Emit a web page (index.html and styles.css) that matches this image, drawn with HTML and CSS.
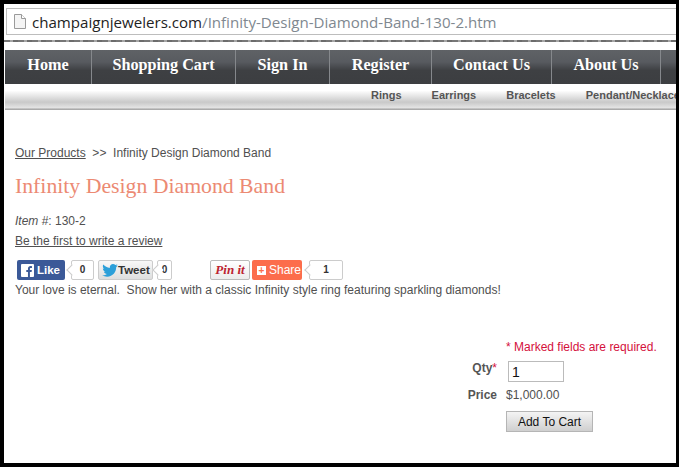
FILE: index.html
```html
<!DOCTYPE html>
<html lang="en">
<head>
  <meta charset="UTF-8">
  <title>Infinity Design Diamond Band</title>
  <link rel="stylesheet" href="styles.css">
</head>
<body>
  <div class="frame">
    <div class="browser-bar">
      <div class="address">
        <svg class="page-icon" width="12" height="15" viewBox="0 0 12 15"><path d="M.5.5h7l4 4v10H.5z" fill="#f4f4f4" stroke="#9a9a9a"/><path d="M7.5.5v4h4" fill="#fff" stroke="#9a9a9a"/></svg>
        <span class="host">champaignjewelers.com</span><span class="path">/Infinity-Design-Diamond-Band-130-2.htm</span>
      </div>
    </div>
    <div class="browser-edge"></div>

    <nav class="main-nav">
      <a href="#" class="nav-home">Home</a>
      <a href="#" class="nav-cart">Shopping Cart</a>
      <a href="#" class="nav-sign">Sign In</a>
      <a href="#" class="nav-reg">Register</a>
      <a href="#" class="nav-contact">Contact Us</a>
      <a href="#" class="nav-about">About Us</a>
    </nav>
    <div class="sub-nav">
      <a href="#">Rings</a>
      <a href="#">Earrings</a>
      <a href="#">Bracelets</a>
      <a href="#">Pendant/Necklace</a>
    </div>

    <div class="content">
      <p class="crumbs"><a href="#">Our Products</a>&nbsp; &gt;&gt;&nbsp; Infinity Design Diamond Band</p>
      <h1>Infinity Design Diamond Band</h1>
      <p class="item-no"><em>Item</em> #: 130-2</p>
      <p class="review"><a href="#">Be the first to write a review</a></p>

      <div class="social">
        <a href="#" class="btn-like">
          <svg width="13" height="13" viewBox="0 0 14 14"><rect width="14" height="14" rx="1" fill="#fff"/><path d="M9.6 14V8.6h1.8l.3-2.100H9.600V5.200c0-.6.2-1 1-1h1.200V2.300C11.500 2.300 11 2.200 10.300 2.200 8.700 2.200 7.500 3.200 7.500 5v1.500H5.700v2.100h1.800V14z" fill="#3b5998"/></svg>
          Like
        </a>
        <span class="count count-like">0</span>
        <a href="#" class="btn-tweet">
          <svg width="16" height="13" viewBox="0 0 24 20"><path d="M24 2.400c-.9.400-1.800.7-2.800.8 1-.6 1.800-1.600 2.200-2.700-1 .6-2 1-3.100 1.200C19.300.7 18 0 16.600 0c-2.700 0-4.900 2.200-4.900 4.900 0 .4 0 .8.100 1.100C7.700 5.800 4.100 3.900 1.700.9 1.200 1.600 1 2.500 1 3.400c0 1.700.9 3.200 2.200 4.100-.8 0-1.600-.2-2.200-.6v.1c0 2.400 1.700 4.400 3.900 4.800-.4.100-.8.200-1.300.2-.3 0-.6 0-.9-.1.600 2 2.400 3.400 4.600 3.400-1.700 1.300-3.800 2.100-6.100 2.100-.4 0-.8 0-1.200-.1 2.200 1.400 4.800 2.200 7.500 2.200 9.100 0 14-7.500 14-14v-.6c1-.7 1.800-1.600 2.500-2.500z" fill="#2b9fd9"/></svg>
          Tweet
        </a>
        <span class="count count-tweet">0</span>
        <a href="#" class="btn-pin">Pin it</a>
        <a href="#" class="btn-share"><span class="plus">+</span>Share</a>
        <span class="count count-share">1</span>
      </div>

      <p class="blurb">Your love is eternal.&nbsp; Show her with a classic Infinity style ring featuring sparkling diamonds!</p>

      <form class="order">
        <p class="required">* Marked fields are required.</p>
        <div class="order-row row-qty">
          <label>Qty<span class="star">*</span></label>
          <input type="text" value="1">
        </div>
        <div class="order-row row-price">
          <label>Price</label>
          <span class="price">$1,000.00</span>
        </div>
        <div class="order-row">
          <label></label>
          <button type="button">Add To Cart</button>
        </div>
      </form>
    </div>
  </div>
</body>
</html>
```

FILE: styles.css
```css
* {
  box-sizing: border-box;
}
html, body {
  margin: 0;
  height: 100%;
  overflow: hidden;
}
body {
  background: #000;
  font-family: "Liberation Sans", Arial, sans-serif;
  color: #505050;
}
a {
  color: inherit;
}
.frame {
  margin: 4px 3px 4px 4px;
  height: 459px;
  background: #fff;
  overflow: hidden;
}

/* browser chrome */
.browser-bar {
  height: 36px;
  padding: 4px 0 0 2px;
}
.address {
  display: flex;
  align-items: center;
  height: 27px;
  border: 1px solid #bdbdbd;
  border-right: none;
  font-family: "Open Sans", sans-serif;
  font-size: 15.1px;
  padding-left: 7px;
  white-space: nowrap;
}
.page-icon {
  margin-right: 6px;
}
.host {
  color: #222;
}
.path {
  color: #808890;
}
.browser-edge {
  height: 2px;
  background: repeating-linear-gradient(90deg, #777 0 6px, #a5a5a5 6px 9px, #6c6c6c 9px 14px);
}

/* nav */
.main-nav {
  display: flex;
  height: 34px;
  margin: 8px 0 0 1px;
  background: linear-gradient(#5f6266 0, #585b60 35%, #3e4043 60%, #3c3e41 100%);
  white-space: nowrap;
}
.main-nav a {
  display: block;
  font-family: "Liberation Serif", Georgia, serif;
  font-size: 16.2px;
  font-weight: bold;
  line-height: 31px;
  color: #fff;
  text-decoration: none;
  text-align: center;
  border-right: 1px solid #85888c;
  flex: none;
}
.nav-home { width: 87px; }
.nav-cart { width: 144px; }
.nav-sign { width: 94px; }
.nav-reg { width: 102px; }
.nav-contact { width: 120px; }
.nav-about { width: 109px; }

.sub-nav {
  display: flex;
  justify-content: flex-start;
  gap: 30px;
  height: 26px;
  margin-left: 1px;
  padding-left: 366px;
  background: linear-gradient(#fff 0, #fff 25%, #c9c9c9 70%, #e4e4e4 92%, #aaa 96%);
  font-size: 11px;
  font-weight: bold;
  line-height: 23px;
  color: #555;
  white-space: nowrap;
  overflow: hidden;
}
.sub-nav a {
  text-decoration: none;
}

/* product */
.content {
  position: relative;
  padding: 35px 0 0 11px;
  font-size: 12px;
}
.content p {
  margin: 0;
}
.crumbs {
  line-height: 16px;
}
h1 {
  margin: 13px 0 0;
  font-family: "Liberation Serif", Georgia, serif;
  font-size: 21.75px;
  line-height: 24px;
  font-weight: normal;
  color: #ec8a73;
  white-space: nowrap;
}
.content .item-no {
  margin-top: 15px;
  line-height: 16px;
}
.content .review {
  margin-top: 4px;
  line-height: 16px;
}

.social {
  display: flex;
  align-items: center;
  height: 20px;
  margin: 11px 0 0 2px;
}
.social a {
  display: flex;
  align-items: center;
  height: 20px;
  border-radius: 2px;
  text-decoration: none;
  font-weight: bold;
  font-size: 11.5px;
  flex: none;
}
.btn-like {
  width: 48px;
  padding-left: 4px;
  gap: 3px;
  background: #3b5998;
  color: #fff;
}
.btn-tweet {
  width: 55px;
  margin-left: 4px;
  padding-left: 3px;
  gap: 0;
  background: linear-gradient(#f8f8f8, #dedede);
  border: 1px solid #ccc;
  color: #333;
}
.btn-pin {
  width: 40px;
  margin-left: 38px;
  justify-content: center;
  border: 1px solid #bbb;
  background: linear-gradient(#fff, #ececec);
  color: #bd2330;
  font-family: "Liberation Serif", serif;
  font-style: italic;
  font-size: 13px !important;
}
.btn-share {
  width: 50px;
  margin-left: 2px;
  padding-left: 5px;
  gap: 3px;
  background: #fc6d4c;
  color: #fff;
  font-weight: normal !important;
  font-size: 12px !important;
}
.plus {
  display: block;
  width: 9px;
  height: 9px;
  background: #fff;
  color: #fc6d4c;
  font-size: 10px;
  font-weight: bold;
  line-height: 9px;
  text-align: center;
}
.count {
  position: relative;
  display: block;
  height: 20px;
  border: 1px solid #ccc;
  border-radius: 2px;
  background: #fff;
  text-align: center;
  font-size: 10px;
  font-weight: bold;
  line-height: 18px;
  color: #333;
}
.count::before {
  content: "";
  position: absolute;
  left: -4px;
  top: 5px;
  width: 7px;
  height: 7px;
  background: #fff;
  border-left: 1px solid #ccc;
  border-bottom: 1px solid #ccc;
  transform: rotate(45deg);
}
.count-like {
  width: 23px;
  margin-left: 6px;
}
.count-tweet {
  width: 15px;
  margin-left: 4px;
}
.count-share {
  width: 34px;
  margin-left: 7px;
}
.content .blurb {
  margin-top: 2px;
  line-height: 16px;
  white-space: nowrap;
}

/* order form */
.order {
  margin: 42px 0 0 434px;
  white-space: nowrap;
}
.content .required {
  margin-left: 57px;
  line-height: 14px;
  color: #d4103c;
}
.order-row {
  display: flex;
  align-items: flex-start;
}
.order-row label {
  width: 48px;
  margin-right: 9px;
  text-align: right;
  font-weight: bold;
  color: #555;
  line-height: 14px;
}
.star {
  color: #d4103c;
  font-weight: normal;
}
.row-qty {
  margin-top: 7px;
}
.row-qty input {
  width: 56px;
  height: 21px;
  margin-left: 2px;
  padding: 0 3px;
  border: 1px solid #bbb;
  font-family: "Liberation Sans", Arial, sans-serif;
  font-size: 14px;
  color: #111;
}
.row-price {
  margin-top: 6px;
  line-height: 14px;
}
.order button {
  width: 87px;
  height: 21px;
  margin-top: 9px;
  padding: 0;
  border: 1px solid #b5b5b5;
  background: linear-gradient(#f4f4f4, #cfcfcf);
  font-family: "Liberation Sans", Arial, sans-serif;
  font-size: 12px;
  color: #111;
}
```
